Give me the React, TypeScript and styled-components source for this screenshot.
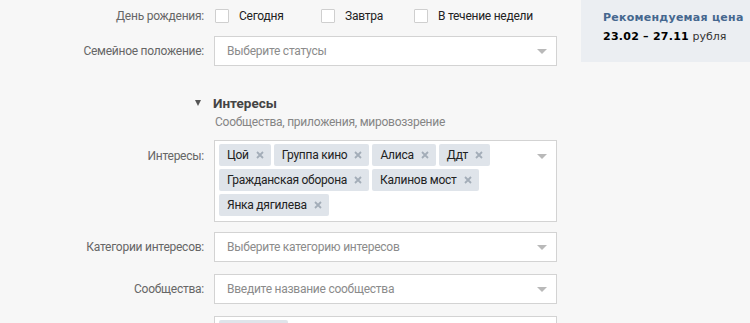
import React from 'react';
import styled, { createGlobalStyle } from 'styled-components';

const GlobalStyle = createGlobalStyle`
  body {
    margin: 0;
    background-color: #f7f7f7;
    font-family: Roboto, 'Noto Sans', sans-serif;
    font-size: 12px;
    line-height: 16px;
    letter-spacing: -0.25px;
    color: #222;
  }
`;

const Page = styled.div`
  display: flex;
  width: 750px;
  height: 323px;
  overflow: hidden;
`;

const Form = styled.div`
  width: 581px;
  flex-shrink: 0;
  display: flex;
  flex-direction: column;
`;

const Row = styled.div<{ $mt: number; $top?: boolean }>`
  display: grid;
  grid-template-columns: 204px 343px;
  column-gap: 10px;
  align-items: ${(p) => (p.$top ? 'start' : 'center')};
  margin-top: ${(p) => p.$mt}px;
`;

const Label = styled.div<{ $pt?: number }>`
  text-align: right;
  color: #666;
  padding-top: ${(p) => p.$pt || 0}px;
`;

const Checks = styled.div`
  display: flex;
  align-items: center;
  height: 20px;
  margin-left: 1px;
`;

const Check = styled.label<{ $w?: number }>`
  display: flex;
  align-items: center;
  gap: 10px;
  width: ${(p) => (p.$w ? `${p.$w}px` : 'auto')};
  color: #222;
`;

const Box = styled.span`
  width: 12px;
  height: 12px;
  border: 1px solid #cfcfcf;
  border-radius: 1px;
  background: #fff;
`;

const Select = styled.div`
  position: relative;
  box-sizing: border-box;
  height: 30px;
  border: 1px solid #d3d3d3;
  background: #fff;
  display: flex;
  align-items: center;
  padding: 0 30px 0 12px;
  color: #8b8b8b;
`;

const PartialField = styled(Select)`
  align-items: flex-start;
  padding: 0;
`;

const Arrow = styled.span<{ $top?: number }>`
  position: absolute;
  right: 9px;
  top: ${(p) => (p.$top !== undefined ? `${p.$top}px` : '50%')};
  margin-top: ${(p) => (p.$top !== undefined ? 0 : -2)}px;
  width: 0;
  height: 0;
  border-left: 5px solid transparent;
  border-right: 5px solid transparent;
  border-top: 5px solid #b9b9b9;
`;

const Section = styled.div`
  margin-top: 29px;
  margin-left: 195px;
  display: flex;
  align-items: center;
  gap: 12px;
  height: 18px;
`;

const Triangle = styled.span`
  width: 0;
  height: 0;
  border-left: 3.5px solid transparent;
  border-right: 3.5px solid transparent;
  border-top: 6px solid #555;
`;

const SectionTitle = styled.div`
  font-weight: 700;
  font-size: 13.5px;
  letter-spacing: 0;
  color: #444;
`;

const Subtitle = styled.div`
  margin-top: 3px;
  margin-left: 215px;
  color: #858585;
`;

const TagBox = styled.div`
  position: relative;
  box-sizing: border-box;
  border: 1px solid #d3d3d3;
  background: #fff;
  padding: 3px 30px 4px 4px;
  min-height: 82px;
  display: flex;
  flex-wrap: wrap;
  align-content: flex-start;
  gap: 3px;
`;

const Tag = styled.span`
  display: inline-flex;
  align-items: center;
  height: 22px;
  padding: 0 7px 0 8px;
  gap: 7px;
  border-radius: 2px;
  background: #dfe4ea;
  color: #222;
  white-space: nowrap;
`;

const Cross = () => (
  <svg width="8" height="8" viewBox="0 0 8 8">
    <path d="M1 1L7 7M7 1L1 7" stroke="#a3adb8" strokeWidth="1.8" />
  </svg>
);

const StubTag = styled.span`
  display: block;
  width: 69px;
  height: 12px;
  margin: 3px 0 0 4px;
  border-radius: 2px 2px 0 0;
  background: #dfe4ea;
`;

const Side = styled.div`
  width: 169px;
  height: 62px;
  box-sizing: border-box;
  padding: 8px 0 0 22px;
  background: #ebeef2;
  font-family: 'DejaVu Sans', Verdana, sans-serif;
  font-size: 11px;
  line-height: 19px;
  letter-spacing: 0;
`;

const PriceTitle = styled.div`
  font-weight: 700;
  color: #45678f;
  letter-spacing: 0.25px;
`;

const Price = styled.div`
  color: #333;
  b {
    color: #000;
    letter-spacing: 0.25px;
  }
`;

const interests = ['Цой', 'Группа кино', 'Алиса', 'Ддт', 'Гражданская оборона', 'Калинов мост', 'Янка дягилева'];

const App: React.FC = () => (
  <>
    <GlobalStyle />
    <Page>
      <Form>
        <Row $mt={6}>
          <Label>День рождения:</Label>
          <Checks>
            <Check $w={106}><Box />Сегодня</Check>
            <Check $w={93}><Box />Завтра</Check>
            <Check><Box />В течение недели</Check>
          </Checks>
        </Row>
        <Row $mt={10}>
          <Label>Семейное положение:</Label>
          <Select>Выберите статусы<Arrow /></Select>
        </Row>
        <Section>
          <Triangle />
          <SectionTitle>Интересы</SectionTitle>
        </Section>
        <Subtitle>Сообщества, приложения, мировоззрение</Subtitle>
        <Row $mt={10} $top>
          <Label $pt={8}>Интересы:</Label>
          <TagBox>
            {interests.map((t) => (
              <Tag key={t}>
                {t}
                <Cross />
              </Tag>
            ))}
            <Arrow $top={13} />
          </TagBox>
        </Row>
        <Row $mt={10}>
          <Label>Категории интересов:</Label>
          <Select>Выберите категорию интересов<Arrow /></Select>
        </Row>
        <Row $mt={12}>
          <Label>Сообщества:</Label>
          <Select>Введите название сообщества<Arrow /></Select>
        </Row>
        <Row $mt={12} $top>
          <Label />
          <PartialField>
            <StubTag />
          </PartialField>
        </Row>
      </Form>
      <Side>
        <PriceTitle>Рекомендуемая цена</PriceTitle>
        <Price><b>23.02 – 27.11</b> рубля</Price>
      </Side>
    </Page>
  </>
);

export default App;
